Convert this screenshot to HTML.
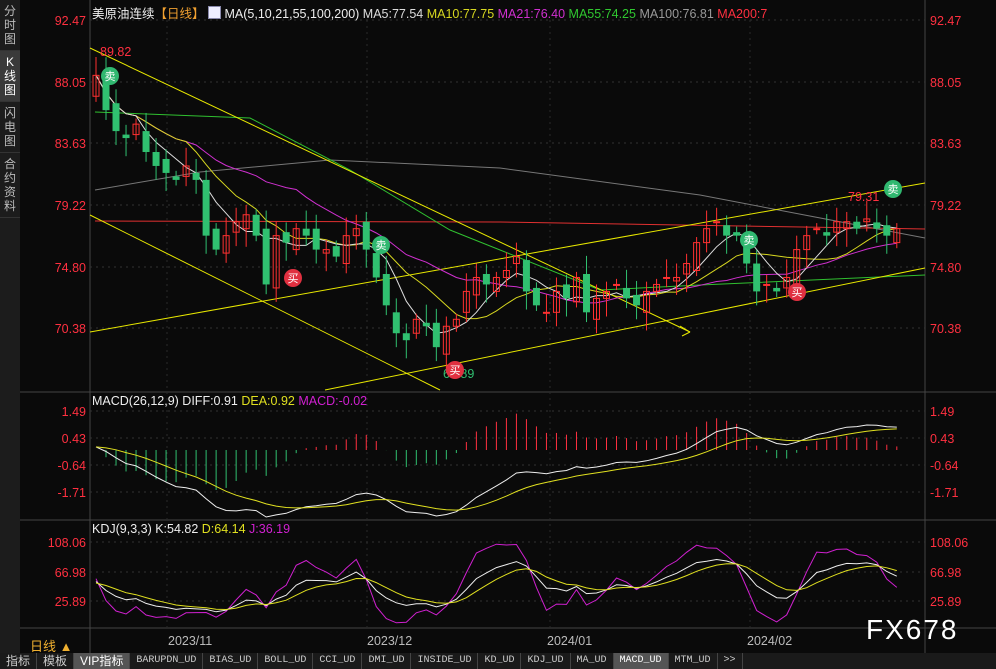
<!DOCTYPE html><html><head><meta charset="utf-8"><style>
body{margin:0;width:996px;height:669px;background:#0a0a0a;overflow:hidden;font-family:"Liberation Sans","Noto Sans CJK SC",sans-serif;position:relative}
.sb{position:absolute;left:0;top:0;width:20px;height:653px;background:#1c1c1c;color:#bbb;font-size:12px;line-height:14px;text-align:center}
.sb div{padding:4px 0;border-bottom:1px solid #333}
.sb .a{background:#3a3a3a;color:#fff}
.t{position:absolute;font-size:12.5px;white-space:nowrap}
.tabs{position:absolute;left:0;top:653px;width:996px;height:16px;background:#1a1a1a;font-size:11px;color:#ccc;display:flex}
.tabs span{padding:0 6px;border-right:1px solid #444;line-height:16px;font-family:"Liberation Mono","Noto Sans CJK SC",monospace;font-size:10px}
.tabs span.z{font-family:"Liberation Sans","Noto Sans CJK SC",sans-serif;font-size:12px}
.tabs .a{background:#555;color:#fff}
</style></head><body>
<div class="sb"><div>分<br>时<br>图</div><div class="a">K<br>线<br>图</div><div>闪<br>电<br>图</div><div>合<br>约<br>资<br>料</div></div>
<svg id="s" width="996" height="669" style="position:absolute;left:0;top:0"></svg>
<div class="t" style="left:92px;top:3px;color:#eee">美原油连续<span style="color:#f0a030">【日线】</span> <span style="display:inline-block;width:11px;height:11px;background:#eef;border:1px solid #88a;vertical-align:-1px"></span> MA(5,10,21,55,100,200) <span style="color:#ddd">MA5:77.54</span> <span style="color:#d8d820">MA10:77.75</span> <span style="color:#d030d0">MA21:76.40</span> <span style="color:#30c830">MA55:74.25</span> <span style="color:#999">MA100:76.81</span> <span style="color:#ff3040">MA200:7</span></div>
<div class="t" style="left:92px;top:394px;color:#eee">MACD(26,12,9) DIFF:0.91 <span style="color:#e0e020">DEA:0.92</span> <span style="color:#d020d0">MACD:-0.02</span></div>
<div class="t" style="left:92px;top:522px;color:#eee">KDJ(9,3,3) K:54.82 <span style="color:#e0e020">D:64.14</span> <span style="color:#d020d0">J:36.19</span></div>
<div class="t" style="left:30px;top:636px;color:#f0b030;font-size:13px">日线 ▲</div>
<div class="t" style="left:168px;top:634px;color:#bbb">2023/11</div>
<div class="t" style="left:367px;top:634px;color:#bbb">2023/12</div>
<div class="t" style="left:547px;top:634px;color:#bbb">2024/01</div>
<div class="t" style="left:747px;top:634px;color:#bbb">2024/02</div>
<div class="t" style="left:866px;top:614px;color:#fff;font-size:28px;letter-spacing:2px">FX678</div>
<div class="tabs"><span class="z">指标</span><span class="z">模板</span><span class="z a">VIP指标</span><span>BARUPDN_UD</span><span>BIAS_UD</span><span>BOLL_UD</span><span>CCI_UD</span><span>DMI_UD</span><span>INSIDE_UD</span><span>KD_UD</span><span>KDJ_UD</span><span>MA_UD</span><span class="a">MACD_UD</span><span>MTM_UD</span><span>&gt;&gt;</span></div>
<script>
var S=document.getElementById('s'),h='';
function L(x1,y1,x2,y2,c,w,d){h+='<line x1="'+x1+'" y1="'+y1+'" x2="'+x2+'" y2="'+y2+'" stroke="'+c+'" stroke-width="'+(w||1)+'"'+(d?' stroke-dasharray="'+d+'"':'')+'/>';}
function T(x,y,t,c,a,sz){h+='<text x="'+x+'" y="'+y+'" fill="'+c+'" font-size="'+(sz||12.5)+'" text-anchor="'+(a||'start')+'" font-family="Liberation Sans,Noto Sans CJK SC,sans-serif">'+t+'</text>';}
function P(pts,c){h+='<polyline fill="none" stroke="'+c+'" stroke-width="1" points="'+pts.join(' ')+'"/>';}
L(90,0,90,653,'#444');L(925,0,925,653,'#444');
L(20,392,996,392,'#444');L(20,520,996,520,'#444');L(20,628,996,628,'#444');
[20,82,143,205,267,328].forEach(function(y,i){L(90,y,925,y,'#333',1,'2,4');var v=['92.47','88.05','83.63','79.22','74.80','70.38'][i];T(86,y+5,v,'#ff3040','end');T(930,y+5,v,'#ff3040');});
[411,438,465,492].forEach(function(y,i){L(90,y,925,y,'#333',1,'2,4');var v=['1.49','0.43','-0.64','-1.71'][i];T(86,y+5,v,'#ff3040','end');T(930,y+5,v,'#ff3040');});
[542,572,601].forEach(function(y,i){L(90,y,925,y,'#333',1,'2,4');var v=['108.06','66.98','25.89'][i];T(86,y+5,v,'#ff3040','end');T(930,y+5,v,'#ff3040');});
[167,367,550,750].forEach(function(x){L(x,20,x,628,'#2a2a2a',1,'2,4');});
var C=[88.5,86,84.5,84,85,83,82,81.5,81,82,81,77,76,77,78,78.5,77,73.5,77,76.5,77.5,77,76,76,75.5,77,77.5,76,74,72,70,69.5,71,70.5,69,70.5,71,73,74,73.5,74,74.5,75.5,73,72,71.5,73,72.5,74,71.5,72.5,73,73.5,72.5,72,73,73.5,74,74,75,76.5,77.5,78,77,77,75,73,73.5,73,74,76,77,77.5,77,78,78,77.5,78.2,77.5,77,77.5];
var n=C.length,O=[],Hh=[],Lw=[];
function Y(p){return 20+(92.47-p)*13.94;}
for(var i=0;i<n;i++){O[i]=i?C[i-1]+((i*7)%5-2)*0.25:87;var a=Math.max(O[i],C[i]),b=Math.min(O[i],C[i]);Hh[i]=a+0.4+((i*3)%4)*0.3;Lw[i]=b-0.4-((i*5)%4)*0.3;}
Hh[0]=89.82;
function X(i){return 96+i*10.01;}
function ma(k){var r=[];for(var i=0;i<n;i++){var s=0,c=0;for(var j=Math.max(0,i-k+1);j<=i;j++){s+=C[j];c++;}r.push(X(i).toFixed(1)+','+Y(s/c).toFixed(1));}return r;}
P(['95,190','200,172','330,160','500,168','700,195','925,238'],'#777');
P(['95,221','500,222','925,229'],'#e03030');
P(['95,112','250,118','350,170','450,230','600,290','700,285','925,275'],'#30c030');
L(90,48,690,332,'#e8e800');L(680,326,690,332,'#e8e800');L(682,336,690,332,'#e8e800');
L(90,215,440,390,'#e8e800');L(90,332,925,183,'#e8e800');L(325,390,925,268,'#e8e800');
P(ma(21),'#d030d0');P(ma(10),'#d8d820');P(ma(5),'#ddd');
for(var i=0;i<n;i++){var up=C[i]>=O[i],col=up?'#ff3030':'#30c070',x=X(i);L(x,Y(Hh[i]),x,Y(Lw[i]),col);var t=Y(Math.max(O[i],C[i])),bt=Y(Math.min(O[i],C[i]));if(up)h+='<rect x="'+(x-3)+'" y="'+t+'" width="6" height="'+Math.max(1,bt-t)+'" fill="none" stroke="'+col+'"/>';else h+='<rect x="'+(x-3.5)+'" y="'+t+'" width="7" height="'+Math.max(1,bt-t)+'" fill="'+col+'"/>';}
T(100,56,'89.82','#ff3040');T(848,201,'79.31','#ff3040');T(443,378,'68.89','#30c070');
function M(x,y,t,c){h+='<circle cx="'+x+'" cy="'+y+'" r="9" fill="'+c+'"/>';T(x,y+4,t,'#fff','middle',11);}
M(110,76,'卖','#30b870');M(381,245,'卖','#30b870');M(749,240,'卖','#30b870');M(893,189,'卖','#30b870');
M(293,278,'买','#e03040');M(455,370,'买','#e03040');M(797,292,'买','#e03040');
function ema(a,k){var r=[],m=2/(k+1);for(var i=0;i<a.length;i++)r.push(i?r[i-1]+m*(a[i]-r[i-1]):a[i]);return r;}
var e1=ema(C,12),e2=ema(C,26),D=[];for(i=0;i<n;i++)D.push(e1[i]-e2[i]);var E=ema(D,9);
var mx=Math.max.apply(0,D.concat(E)),mn=Math.min.apply(0,D.concat(E));
function YM(v){return 425+(mx-v)/(mx-mn)*92;}
var base=450,dp=[],ep=[],hm=0;
for(i=0;i<n;i++)hm=Math.max(hm,Math.abs(D[i]-E[i]));
for(i=0;i<n;i++){var hv=(D[i]-E[i]);L(X(i),base,X(i),base-hv/hm*40,hv>=0?'#ff3040':'#30c070');dp.push(X(i)+','+YM(D[i]).toFixed(1));ep.push(X(i)+','+YM(E[i]).toFixed(1));}
P(dp,'#eee');P(ep,'#e0e020');
var K=[],Dd=[],J=[],k=50,d=50;for(i=0;i<n;i++){var hi=-1e9,lo=1e9;for(var j=Math.max(0,i-8);j<=i;j++){hi=Math.max(hi,Hh[j]);lo=Math.min(lo,Lw[j]);}var rsv=(C[i]-lo)/(hi-lo)*100;k=2/3*k+rsv/3;d=2/3*d+k/3;K.push(k);Dd.push(d);J.push(3*k-2*d);}
function YK(v){return 542+(108.06-v)*(59/82.17);}
function pl(a){return a.map(function(v,i){return X(i)+','+Math.max(530,Math.min(626,YK(v))).toFixed(1)});}
P(pl(J),'#d020d0');P(pl(K),'#eee');P(pl(Dd),'#e0e020');
S.innerHTML=h;
</script>
</body></html>
